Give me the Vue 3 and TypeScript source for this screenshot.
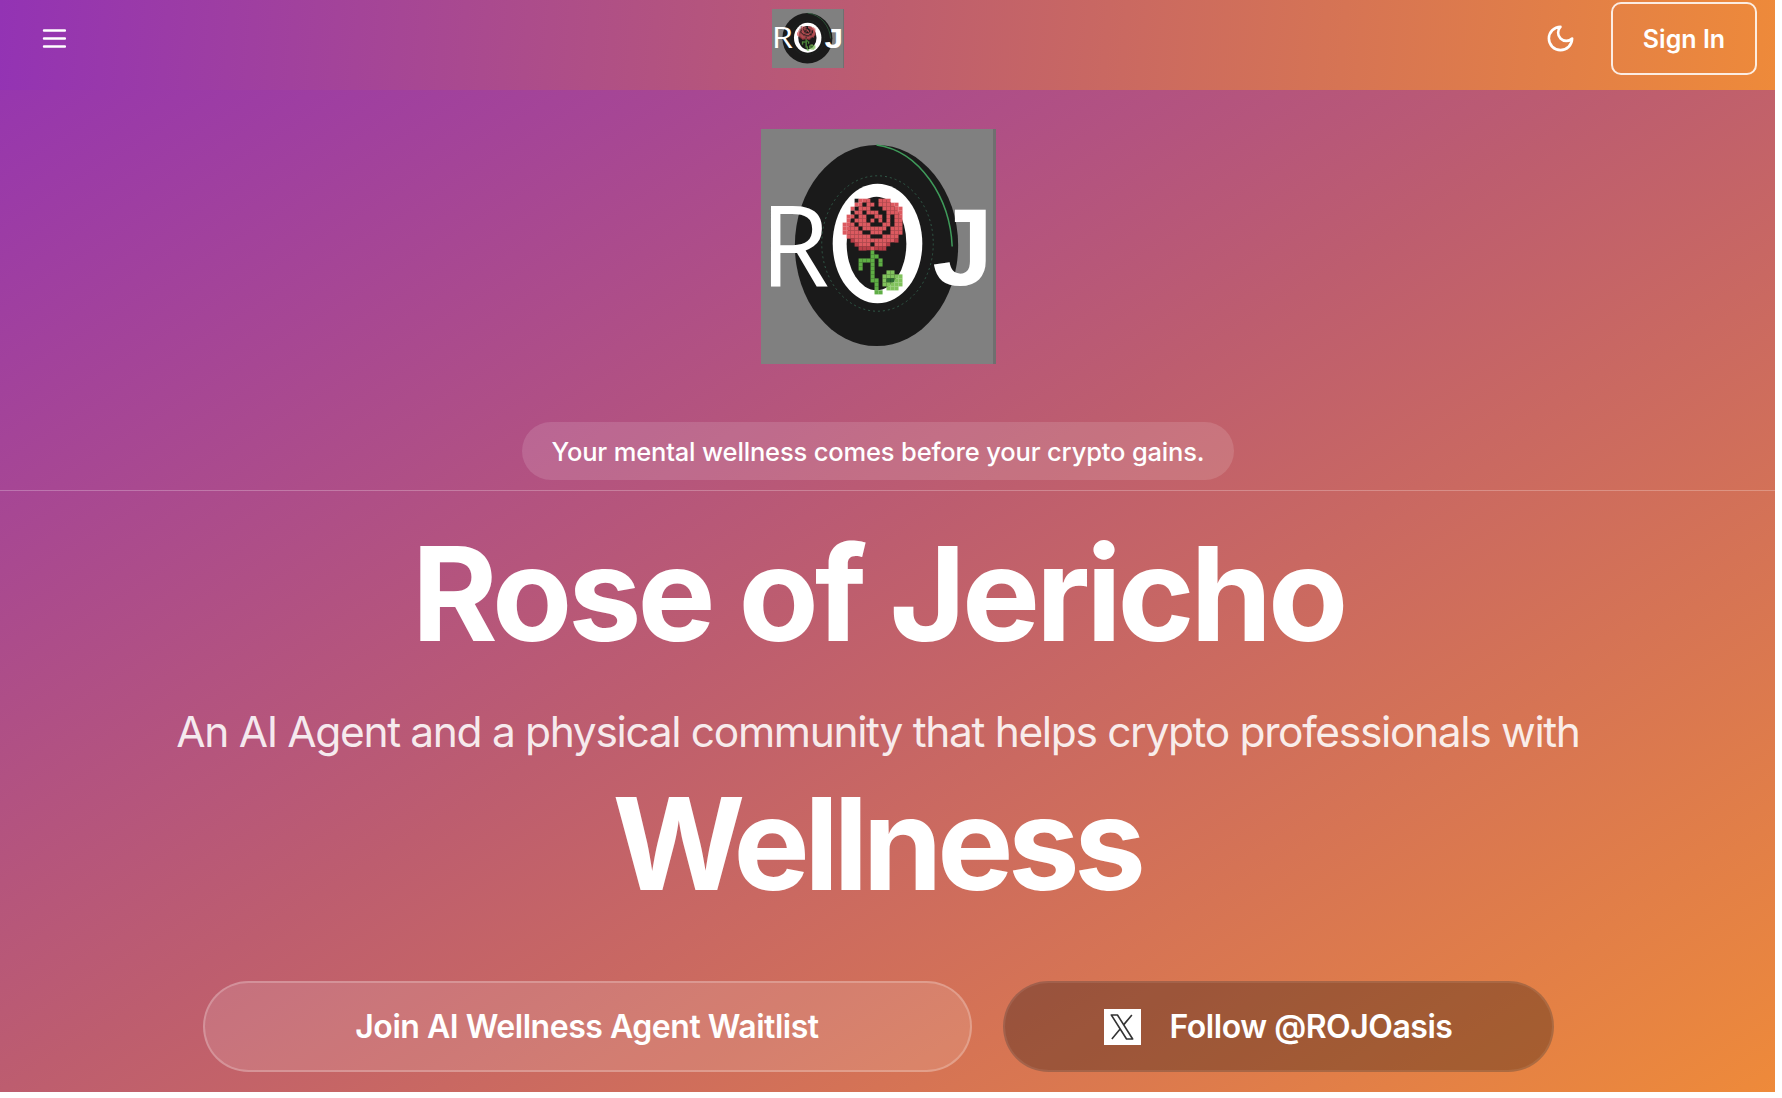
<script setup lang="ts">
const title = 'Rose of Jericho'
const colors: Record<string, string> = {
  r: '#dc5a60', d: '#b93f48', k: '#1a1a1a', g: '#5fae45', l: '#80c25c', m: '#2c6a30',
}
const art = [
  '...krrrk.rrr....',
  '...rrkrrkrrrrr..',
  '..rkrrrkkkrrrrr.',
  '..krrkrrrkkrrrr.',
  '.rrkrrkkrrkrkrr.',
  '.rkrrrkrkrkrkrr.',
  'rrrkrrrkkkrrkrr.',
  'rrrrkrrrrrrkrrr.',
  'rrrrrkkrrrkkrrr.',
  '.rrrrrrkkkrrrr..',
  '..drrrrrrrrrrd..',
  '...drrrkrrrdk...',
  '....dddrdddk....',
  '......kgk.......',
  '.......gg.......',
  '....gggg.g......',
  '....g..g.g......',
  '....g..g........',
  '.......g...ll...',
  '.......g..lllll.',
  '.......gg.lmmll.',
  '........g.lllll.',
  '........g..lll..',
  '........gg......',
]
const pixels = art.flatMap((row, y) =>
  [...row].flatMap((c, x) => (colors[c] ? [{ x: 82 + x * 4, y: 70 + y * 4, fill: colors[c] }] : [])),
)
</script>

<template>
  <div class="page">
    <header class="bar">
      <svg class="menu" viewBox="0 0 24 24" fill="none" stroke="currentColor" stroke-width="2.4" stroke-linecap="round">
        <path d="M2 4.5h21M2 12.5h21M2 20.5h21" />
      </svg>
      <svg class="logo small" viewBox="0 0 236 236" preserveAspectRatio="none">
        <use href="#roj" />
      </svg>
      <div class="actions">
        <svg class="moon" viewBox="0 0 24 24" fill="none" stroke="currentColor" stroke-width="2" stroke-linecap="round" stroke-linejoin="round">
          <path d="M12 3a6 6 0 0 0 9 9 9 9 0 1 1-9-9Z" />
        </svg>
        <button class="signin">Sign In</button>
      </div>
    </header>

    <main>
      <section class="column top">
        <svg class="logo big" viewBox="0 0 236 236">
          <defs>
            <g id="roj">
              <rect width="236" height="236" fill="#808080" />
              <rect x="233" width="3" height="236" fill="#6f6f6f" />
              <ellipse cx="116" cy="117" rx="82" ry="101" fill="#1a1a1a" />
              <path d="M116 16C160 22 190 70 192 118" fill="none" stroke="#3f9a5a" stroke-width="1.5" />
              <ellipse cx="117" cy="115" rx="56" ry="68" fill="none" stroke="#2f5a48" stroke-width="1" stroke-dasharray="2 3" />
              <ellipse cx="117" cy="115" rx="45" ry="60" fill="#fff" />
              <ellipse cx="116" cy="115" rx="30" ry="47" fill="#1a1a1a" />
              <text x="-1" y="158" class="lt">R</text>
              <text x="172" y="157" class="lt j">J</text>
              <rect v-for="(p, i) in pixels" :key="i" :x="p.x" :y="p.y" width="4.1" height="4.1" :fill="p.fill" />
            </g>
          </defs>
          <use href="#roj" />
        </svg>
        <div class="pill">Your mental wellness comes before your crypto gains.</div>
      </section>
      <hr class="rule" />
      <section class="column">
        <h1 class="title">{{ title }}</h1>
        <p class="sub">An AI Agent and a physical community that helps crypto professionals with</p>
        <h2 class="word">Wellness</h2>
        <div class="cta">
          <button class="btn ghost">Join AI Wellness Agent Waitlist</button>
          <button class="btn solid">
            <span class="x">
              <svg viewBox="0 0 24 24" fill="none" stroke="#333" stroke-width="1.2" stroke-linejoin="round">
                <path d="M4 3h4.6l11.4 18h-4.6ZM19.4 3 13.2 10.4M10.6 13.5 4.4 21" />
              </svg>
            </span>
            Follow @ROJOasis
          </button>
        </div>
      </section>
    </main>
  </div>
</template>

<style>
html, body { margin: 0; background: #fff; }
</style>

<style scoped>
.page {
  width: 1775px;
  height: 1092px;
  overflow: hidden;
  background: linear-gradient(to bottom right, #9333b4 0%, #bd5d6f 50%, #ee8a3a 100%);
  font-family: Inter, "Liberation Sans", sans-serif;
  color: #fff;
}
.bar {
  height: 90px;
  box-sizing: border-box;
  display: flex;
  align-items: center;
  justify-content: space-between;
  padding: 0 18px 0 42px;
  background: linear-gradient(95deg, #9333b4 0%, #bd5d6f 50%, #ee8a3a 100%);
  position: relative;
}
.menu { width: 24px; height: 24px; margin-top: -14px; }
.logo { display: block; }
.small {
  width: 72px;
  height: 59px;
  position: absolute;
  left: 772px;
  top: 9px;
}
.actions { display: flex; align-items: center; gap: 35px; margin-top: -13px; }
.moon { width: 31px; height: 31px; }
.signin {
  width: 146px;
  height: 73px;
  box-sizing: border-box;
  border: 2px solid rgba(255, 255, 255, .85);
  border-radius: 10px;
  background: transparent;
  color: #fff;
  font: 600 25px Inter, "Liberation Sans", sans-serif;
}
.column {
  display: flex;
  flex-direction: column;
  align-items: center;
  padding-right: 19px;
}
.top { padding-top: 39px; }
.big { width: 235px; height: 235px; }
.pill {
  margin-top: 58px;
  height: 58px;
  width: 712px;
  display: flex;
  align-items: center;
  justify-content: center;
  border-radius: 29px;
  background: rgba(255, 255, 255, .13);
  font-size: 25.5px;
  font-weight: 550;
  letter-spacing: -.16px;
}
.rule {
  margin: 10px 0 0;
  border: 0;
  height: 1px;
  background: rgba(255, 255, 255, .25);
}
.title {
  margin: 28px 0 0;
  font-size: 131px;
  line-height: 150px;
  font-weight: 700;
  letter-spacing: -4.1px;
}
.sub {
  margin: 33px 0 0;
  font-size: 42.5px;
  line-height: 60px;
  font-weight: 400;
  color: rgba(255, 255, 255, .88);
  letter-spacing: -1.35px;
}
.word {
  margin: 7px 3px 0 0;
  font-size: 128px;
  line-height: 150px;
  font-weight: 700;
  letter-spacing: -5.4px;
}
.cta {
  display: flex;
  gap: 31px;
  margin-top: 62px;
}
.btn {
  height: 91px;
  box-sizing: border-box;
  border-radius: 46px;
  color: #fff;
  font: 560 32px Inter, "Liberation Sans", sans-serif;
  letter-spacing: -.47px;
  display: flex;
  align-items: center;
  justify-content: center;
}
.ghost {
  width: 769px;
  background: rgba(255, 255, 255, .12);
  border: 2px solid rgba(255, 255, 255, .22);
}
.solid {
  width: 551px;
  gap: 29px;
  background: rgba(0, 0, 0, .28);
  border: 2px solid rgba(255, 255, 255, .08);
}
.x {
  width: 37px;
  height: 36px;
  background: #fff;
  display: flex;
  align-items: center;
  justify-content: center;
}
.x svg { width: 32px; height: 32px; }
.lt {
  font-family: "Open Sans", "Liberation Sans", sans-serif;
  font-size: 113px;
  fill: #fff;
}
.j { font-family: "Liberation Sans", sans-serif; font-weight: 700; font-size: 110px; }
</style>
